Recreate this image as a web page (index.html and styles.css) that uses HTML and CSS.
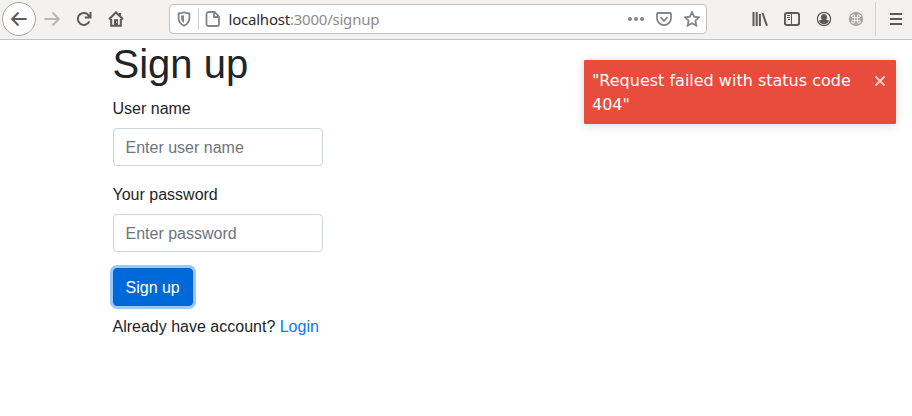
FILE: index.html
```html
<!DOCTYPE html>
<html lang="en">
<head>
<meta charset="utf-8">
<title>Sign up</title>
<link rel="stylesheet" href="styles.css">
</head>
<body>
<header class="toolbar">
  <div class="nav">
    <span class="back"><svg class="icon" viewBox="0 0 16 16"><path d="M15.600 8H1.500M7.500 1.500L1.200 8l6.300 6.500"/></svg></span>
    <svg class="icon faded" viewBox="0 0 16 16"><path d="M.4 8h14.100M8.500 1.500L14.800 8l-6.300 6.500"/></svg>
    <svg class="icon" viewBox="0 0 16 16"><path d="M13.300 10.300A6 6 0 1 1 13 4.900V6.500H8.800M14.500 1v6.500"/></svg>
    <svg class="icon" viewBox="0 0 16 16"><path d="M1 8.300L8 1.500l7 6.800M3.200 8v6.800h9.600V8"/><path class="solid" d="M6 8.300h4V15H6zM11 2h2v4h-2z"/><path class="knockout" d="M8.100 10.500h1v1.200h-1z"/></svg>
  </div>
  <div class="urlbar">
    <svg class="icon gray" viewBox="0 0 16 16"><path d="M8 1.300c1.700.9 3.600 1.200 5.400 1.200v4.300c0 3.800-2 6.500-5.400 7.900C4.600 13.300 2.600 10.600 2.600 6.800V2.500C4.400 2.500 6.300 2.200 8 1.300z"/><path class="solid" d="M8 4v8C6 10.800 5 9 5 6.800V4.600C6 4.600 7 4.400 8 4z"/></svg>
    <span class="divider"></span>
    <svg class="icon gray" viewBox="0 0 16 16"><path d="M3.500 1h6L14 5.500V13a2 2 0 0 1-2 2H3.500a2 2 0 0 1-2-2V3a2 2 0 0 1 2-2z"/><path d="M9 1.500V6h4.500"/></svg>
    <span class="url"><b>localhost</b>:3000/signup</span>
    <div class="actions">
      <svg class="icon gray" viewBox="0 0 16 16"><circle class="solid" cx="2" cy="8" r="2"/><circle class="solid" cx="8" cy="8" r="2"/><circle class="solid" cx="14" cy="8" r="2"/></svg>
      <svg class="icon gray" viewBox="0 0 16 16"><path d="M2 2h12a1 1 0 0 1 1 1v4.300a7 6.700 0 0 1-14 0V3a1 1 0 0 1 1-1z"/><path d="M4.500 6.300L8 9.700l3.500-3.400"/></svg>
      <svg class="icon gray" viewBox="0 0 16 16"><path d="M8 1.200l2.100 4.500 4.900.6-3.600 3.400.9 4.900L8 12.200l-4.300 2.400.9-4.900L1 6.300l4.900-.6z"/></svg>
    </div>
  </div>
  <div class="tools">
    <svg class="icon" viewBox="0 0 16 16"><path d="M1.500 1v14M4.700 1v14M7.900 3v12M10.500 2l4.500 12.800"/></svg>
    <svg class="icon" viewBox="0 0 16 16"><rect x=".9" y="1.900" width="14.200" height="12.200" rx="2"/><path class="hair" d="M7.500 2v12M3 4.500h3M3 6.500h3M4 8.500h2"/></svg>
    <svg class="icon" viewBox="0 0 16 16"><circle class="thin" cx="8" cy="8" r="6.600"/><path class="solid" d="M8 3a3.200 3.200 0 0 1 2.200 5.500l2.900 1.300C12.200 12 10.400 13.200 8 13.200S3.800 12 2.900 9.800l2.900-1.300A3.200 3.200 0 0 1 8 3z"/></svg>
    <svg class="icon" viewBox="0 0 16 16"><circle class="disc" cx="8" cy="8" r="7.200"/><path class="command" d="M6.500 6.500h3v3h-3zM6.500 6.500H5.100a1.400 1.400 0 1 1 1.400-1.400zM9.500 6.500V5.100a1.400 1.400 0 1 1 1.400 1.400zM9.500 9.500h1.400a1.400 1.400 0 1 1-1.400 1.400zM6.500 9.500v1.400a1.400 1.400 0 1 1-1.400-1.400z"/></svg>
  </div>
  <span class="separator"></span>
  <svg class="icon menu" viewBox="0 0 16 16"><path d="M2 3h12M2 8h12M2 13h12"/></svg>
</header>
<main class="page">
  <h1>Sign up</h1>
  <form class="form">
    <label for="user">User name</label>
    <input id="user" type="text" placeholder="Enter user name">
    <label for="password">Your password</label>
    <input id="password" type="password" placeholder="Enter password">
    <button type="button">Sign up</button>
  </form>
  <p>Already have account? <a href="#">Login</a></p>
</main>
<div class="toast" role="alert">
  <span class="message">"Request failed with status code 404"</span>
  <svg class="close" viewBox="0 0 12 12"><path d="M1.500 1.500l9 9M10.500 1.500l-9 9"/></svg>
</div>
</body>
</html>
```
FILE: styles.css
```css
* { box-sizing: border-box; }
body {
  margin: 0;
  background: #fff;
  color: #212529;
  font: 16px/24px "Liberation Sans", Arial, sans-serif;
}
.toolbar {
  display: flex;
  align-items: center;
  height: 40px;
  padding: 0 8px 2px 2px;
  background: #f3f2f0;
  border-bottom: 1px solid #c5c3c0;
}
.icon {
  display: block;
  flex: none;
  width: 16px;
  height: 16px;
  fill: none;
  stroke: #5c5b59;
  stroke-width: 2;
}
.icon .solid { fill: #5c5b59; stroke: none; }
.icon .thin { stroke-width: 1.3; }
.icon .hair { stroke-width: 1; }
.icon .knockout { fill: #f3f2f0; stroke: none; }
.icon .disc { fill: #aaa9a8; stroke: none; }
.icon .command { stroke: #f3f2f0; stroke-width: 1; }
.icon.faded { stroke: #b9b8b6; }
.icon.gray { stroke: #858585; stroke-width: 1.8; }
.icon.gray .solid { fill: #858585; }
.nav { display: flex; align-items: center; gap: 16px; width: 167px; }
.back {
  display: grid;
  place-items: center;
  width: 34px;
  height: 34px;
  margin-right: -8px;
  border: 1px solid #aaa8a5;
  border-radius: 50%;
  background: #fff;
}
.urlbar {
  display: flex;
  align-items: center;
  width: 538px;
  height: 30px;
  padding: 0 6px;
  background: #fff;
  border: 1px solid #c4c2bf;
  border-radius: 4px;
}
.divider { width: 1px; height: 22px; margin: 0 6px; background: #cfcfcf; }
.url {
  margin-left: 7.5px;
  color: #8b8b8b;
  font: 15px/22px "Noto Sans", sans-serif;
  letter-spacing: -0.22px;
}
.url b { color: #2c2c2c; font-weight: 400; }
.actions { display: flex; gap: 12px; margin-left: auto; }
.tools { display: flex; gap: 16px; margin-left: 45px; }
.separator { width: 1px; height: 34px; margin-left: 11px; background: #d6d4d1; }
.menu { margin-left: auto; }
.page { width: 210px; margin-left: 112.5px; }
h1 { margin: 0 0 8px; font-size: 40px; line-height: 48px; font-weight: 400; }
.form { display: flex; flex-direction: column; align-items: flex-start; }
label { padding-top: 1px; margin-bottom: 7px; }
input {
  width: 210px;
  height: 38px;
  margin: 0 0 16px;
  padding: 8px 12px 6px;
  border: 1px solid #ced4da;
  border-radius: 4px;
  font: inherit;
}
input::placeholder { color: #6c757d; opacity: 1; }
button {
  height: 38px;
  padding: 7px 12px 5px;
  border: 1px solid #0062cc;
  border-radius: 4px;
  background: #0069d9;
  color: #fff;
  font: inherit;
  box-shadow: 0 0 0 3px #99caff;
}
p { margin: 9px 0 0; white-space: nowrap; }
a { color: #007bff; text-decoration: none; }
.toast {
  position: absolute;
  top: 60px;
  right: 16px;
  display: flex;
  justify-content: space-between;
  width: 312px;
  height: 64px;
  padding: 9px 10px 7px 8px;
  border-radius: 1px;
  background: #e74c3c;
  color: #fff;
  font-family: "DejaVu Sans", sans-serif;
  box-shadow: 0 1px 10px rgba(0, 0, 0, 0.1), 0 2px 15px rgba(0, 0, 0, 0.05);
}
.message { width: 270px; }
.close { width: 12px; height: 12px; margin-top: 6px; fill: none; stroke: #f8cec9; stroke-width: 2; }
```
